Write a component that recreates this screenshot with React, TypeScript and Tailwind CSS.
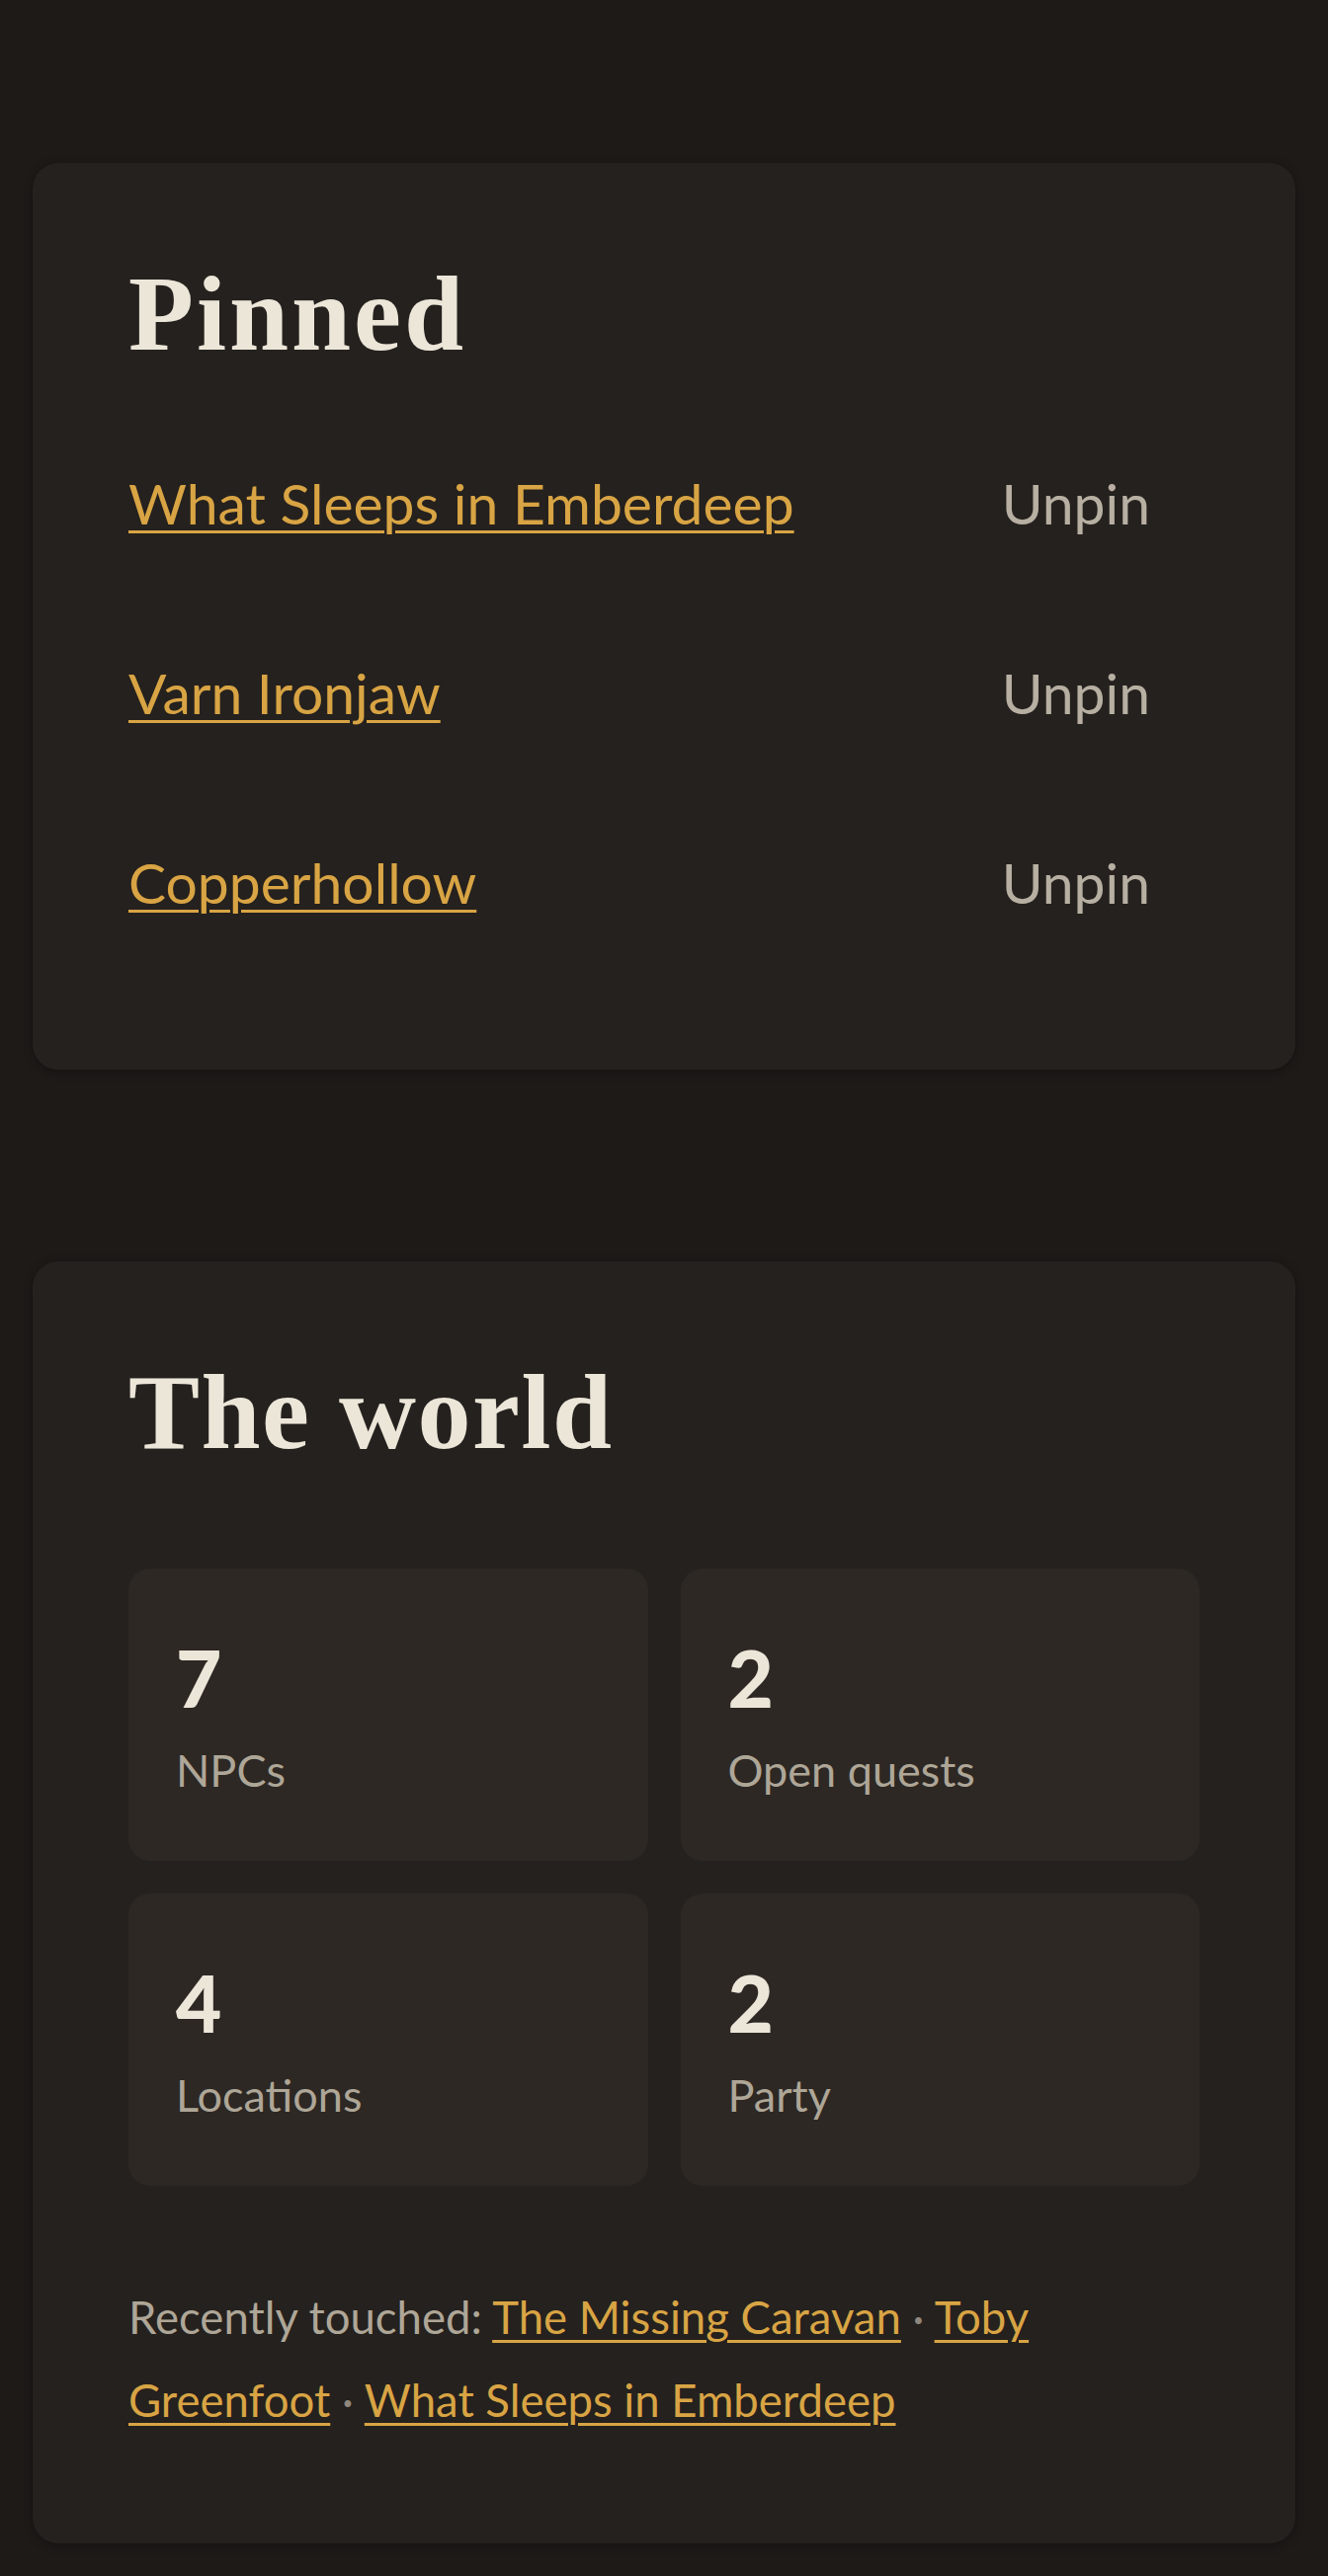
import React from 'react';

const pinned = ['What Sleeps in Emberdeep', 'Varn Ironjaw', 'Copperhollow'];

const stats = [
  { value: 7, label: 'NPCs' },
  { value: 2, label: 'Open quests' },
  { value: 4, label: 'Locations' },
  { value: 2, label: 'Party' },
];

const recent = ['The Missing Caravan', 'Toby Greenfoot', 'What Sleeps in Emberdeep'];

const serif = "font-['Liberation_Serif',Georgia,serif]";
const sans = "font-['Lato','Open_Sans',sans-serif]";

const App: React.FC = () => {
  return (
    <div className={`min-h-[2608px] bg-[#1e1a18] px-[33px] pt-[165px] pb-[40px] ${sans}`}>
      {/* pinned */}
      <section className="rounded-[26px] bg-[#25211e] px-[97px] pt-[93px] pb-[93px] shadow-[0_2px_10px_rgba(0,0,0,0.35)]">
        <h2 className={`${serif} text-[108px] leading-[120px] font-bold tracking-[3px] text-[#ece6d9]`}>Pinned</h2>
        <ul className="mt-[36px]">
          {pinned.map((name) => (
            <li key={name} className="flex h-[192px] items-center justify-between">
              <a href="#" className="text-[57px] text-[#d8a444] underline decoration-[3px] underline-offset-[6px]">
                {name}
              </a>
              <button className="px-[50px] text-[57px] text-[#b7afa2]">Unpin</button>
            </li>
          ))}
        </ul>
      </section>

      {/* world overview */}
      <section className="mt-[194px] rounded-[26px] bg-[#25211e] px-[97px] pt-[93px] pb-[103px] shadow-[0_2px_10px_rgba(0,0,0,0.35)]">
        <h2 className={`${serif} text-[108px] leading-[120px] font-bold tracking-[1.5px] text-[#ece6d9]`}>The world</h2>
        <div className="mt-[98px] grid grid-cols-2 gap-[33px]">
          {stats.map((s) => (
            <div key={s.label} className="h-[296px] rounded-[22px] bg-[#2d2824] px-[48px] pt-[70px]">
              <div className="text-[80px] leading-none font-black text-[#ece6d9]">{s.value}</div>
              <div className="mt-[21px] text-[45px] text-[#aea697]">{s.label}</div>
            </div>
          ))}
        </div>
        <p className="mt-[91px] text-[45.5px] leading-[84px] text-[#aea697]">
          Recently touched:{' '}
          {recent.map((r, i) => (
            <React.Fragment key={r}>
              {i > 0 && <span className="text-[#8f887c]"> · </span>}
              <a href="#" className="text-[#d8a444] underline decoration-[3px] underline-offset-[6px]">
                {r}
              </a>
            </React.Fragment>
          ))}
        </p>
      </section>
    </div>
  );
};

export default App;
